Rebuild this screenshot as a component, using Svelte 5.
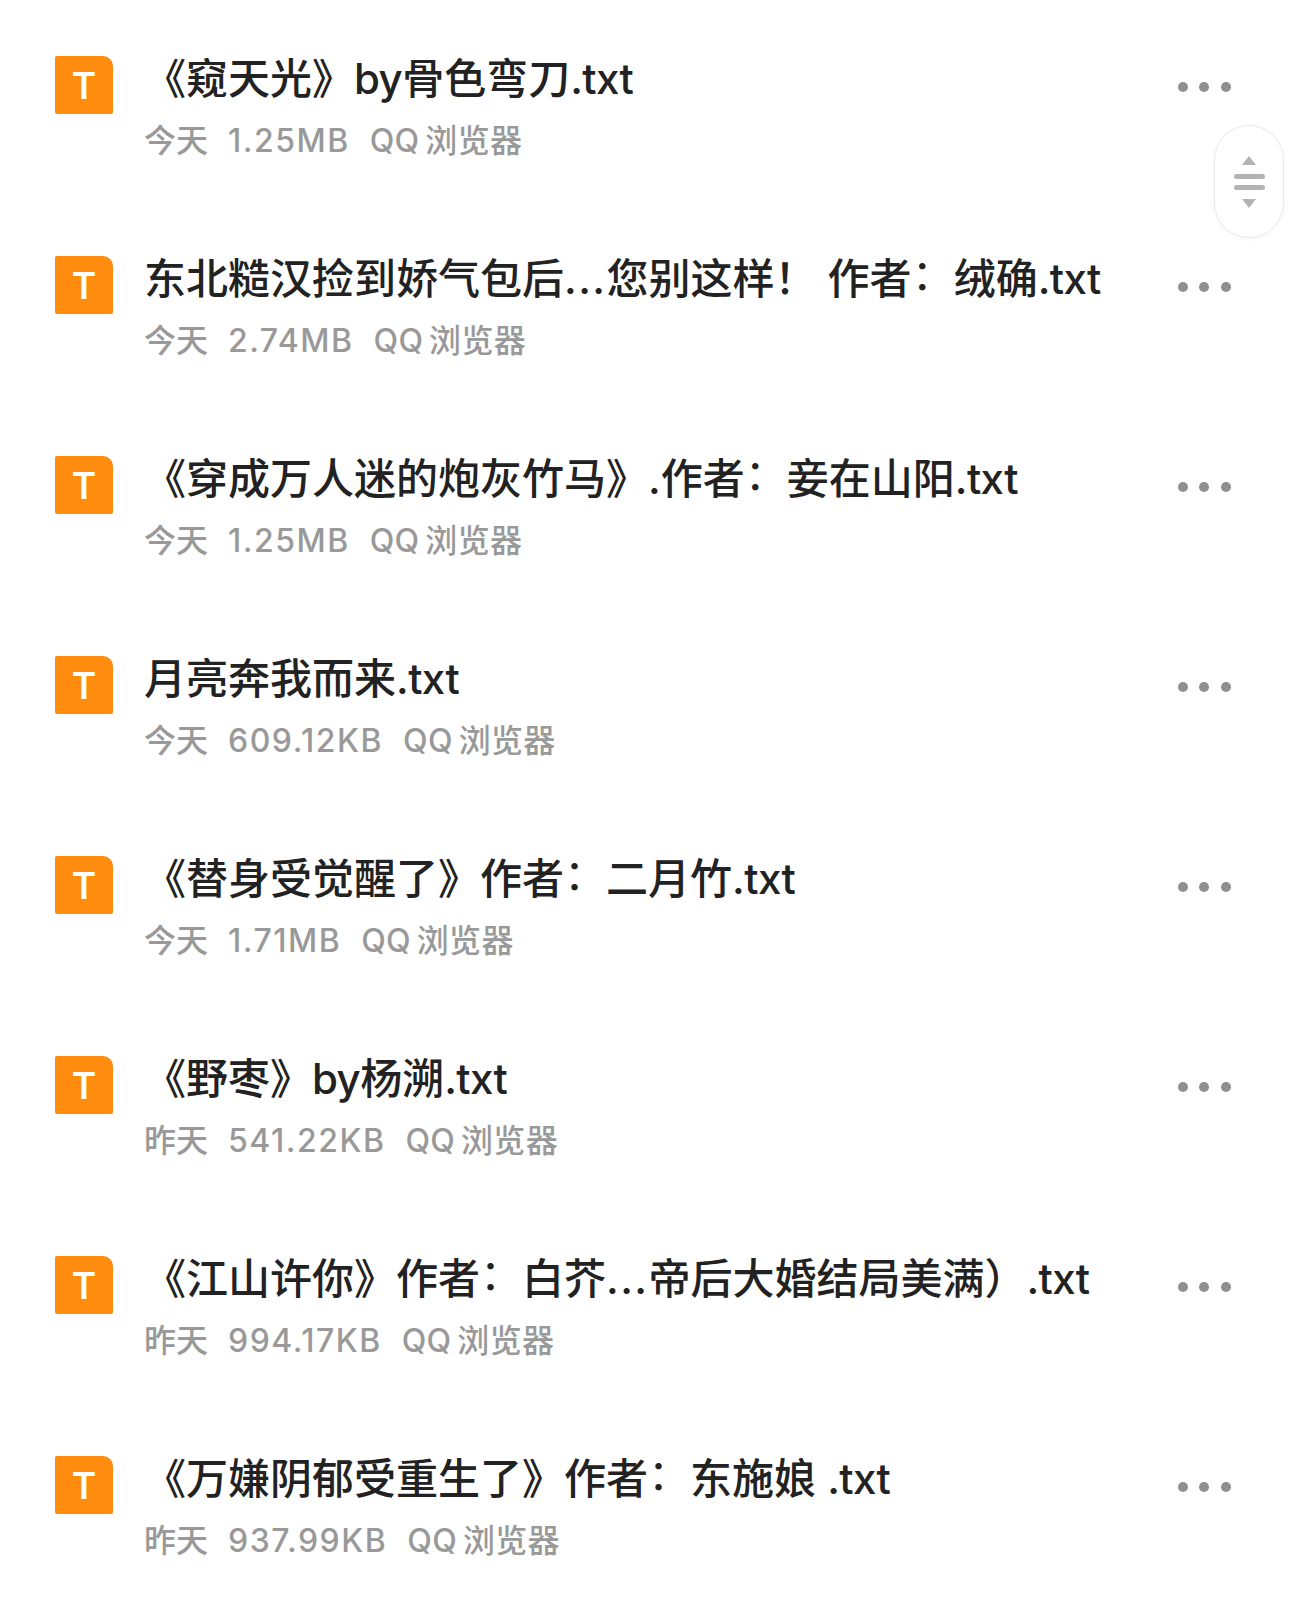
<script>
	const files = [
		{ name: '《窥天光》by骨色弯刀.txt', day: '今天', size: '1.25MB' },
		{ name: '东北糙汉捡到娇气包后...您别这样！ 作者：绒确.txt', day: '今天', size: '2.74MB' },
		{ name: '《穿成万人迷的炮灰竹马》.作者：妾在山阳.txt', day: '今天', size: '1.25MB' },
		{ name: '月亮奔我而来.txt', day: '今天', size: '609.12KB' },
		{ name: '《替身受觉醒了》作者：二月竹.txt', day: '今天', size: '1.71MB' },
		{ name: '《野枣》by杨溯.txt', day: '昨天', size: '541.22KB' },
		{ name: '《江山许你》作者：白芥...帝后大婚结局美满）.txt', day: '昨天', size: '994.17KB' },
		{ name: '《万嫌阴郁受重生了》作者：东施娘 .txt', day: '昨天', size: '937.99KB' }
	];

	// colon, ellipsis and latin bits sit differently from the CJK run
	const parts = (name) => name.split(/(：|\.\.\.|\.txt|by)/).filter(Boolean);
	const kind = (p) => (p === '：' ? 'colon' : p === '...' ? 'dots' : p === '.txt' || p === 'by' ? 'latin' : '');
</script>

<div class="list">
	{#each files as f}
		<div class="row">
			<div class="icon">T</div>
			<div class="info">
				<div class="name">
					{#each parts(f.name) as p}<span class={kind(p)}>{p}</span>{/each}
				</div>
				<div class="meta">
					<span>{f.day}</span>
					<span class="size">{f.size}</span>
					<span class="source">QQ 浏览器</span>
				</div>
			</div>
			<div class="more"><i></i><i></i><i></i></div>
		</div>
	{/each}

	<div class="scroller">
		<span class="up"></span>
		<span class="bar"></span>
		<span class="bar"></span>
		<span class="down"></span>
	</div>
</div>

<style>
	:global(body) {
		background: #fff;
	}

	.list {
		position: relative;
		height: 1599px;
		padding-top: 50px;
		box-sizing: border-box;
		overflow: hidden;
		font-family: Inter, "Noto Sans CJK SC", sans-serif;
	}

	.row {
		display: flex;
		align-items: flex-start;
		height: 200px;
		padding-left: 55px;
		padding-right: 59px;
	}

	.icon {
		flex-shrink: 0;
		width: 58px;
		height: 58px;
		margin-top: 6px;
		background: #ff8c0f;
		border-radius: 2px 10px 2px 2px;
		color: #fff;
		font-size: 37px;
		font-weight: 600;
		line-height: 60px;
		text-align: center;
	}

	.info {
		flex: 1;
		margin-left: 31px;
	}

	.name {
		font-size: 42px;
		font-weight: 500;
		line-height: 58px;
		height: 58px;
		color: #222;
		white-space: pre;
	}

	.name span {
		line-height: 0;
	}

	.latin {
		letter-spacing: -0.6px;
	}

	.dots {
		letter-spacing: 1.4px;
	}

	.colon {
		vertical-align: 4px;
		font-weight: 400;
	}

	.meta {
		display: flex;
		gap: 20px;
		margin-top: 9px;
		font-size: 32px;
		font-weight: 500;
		line-height: 48px;
		color: #999;
	}

	.size {
		letter-spacing: 1.5px;
	}

	.source {
		word-spacing: -3px;
		letter-spacing: 0.3px;
	}

	.more {
		display: flex;
		gap: 11.6px;
		margin-top: 32px;
	}

	.more i {
		width: 10px;
		height: 10px;
		border-radius: 50%;
		background: #8f8f8f;
	}

	.scroller {
		position: absolute;
		top: 125px;
		left: 1214px;
		width: 70px;
		height: 113px;
		box-sizing: border-box;
		border: 1px solid #e9e9e9;
		border-radius: 35px;
		background: #fff;
		box-shadow: 0 2px 6px rgba(0, 0, 0, 0.03);
		display: flex;
		flex-direction: column;
		align-items: center;
		justify-content: center;
		gap: 6px;
	}

	.bar {
		width: 31px;
		height: 5px;
		border-radius: 3px;
		background: #b3b3b3;
	}

	.up,
	.down {
		width: 0;
		height: 0;
		border-left: 7px solid transparent;
		border-right: 7px solid transparent;
	}

	.up {
		border-bottom: 9px solid #b3b3b3;
		margin-bottom: 3px;
	}

	.down {
		border-top: 9px solid #b3b3b3;
		margin-top: 3px;
	}
</style>
